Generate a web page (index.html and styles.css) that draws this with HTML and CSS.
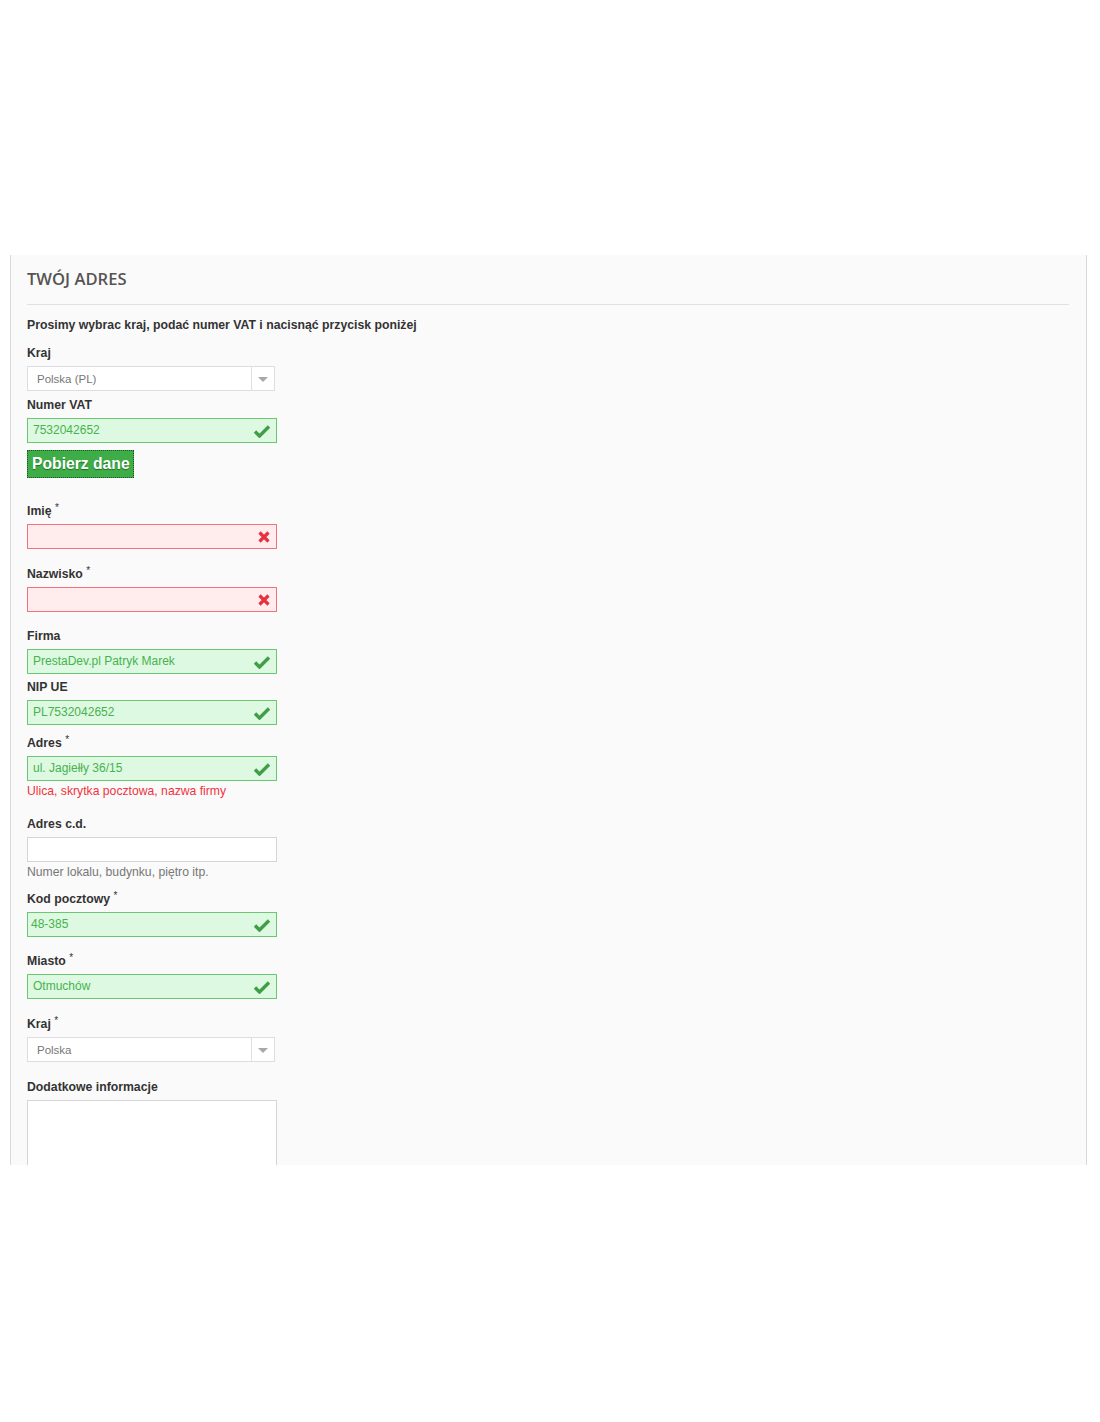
FILE: index.html
```html
<!DOCTYPE html>
<html lang="pl">
<head>
    <meta charset="UTF-8">
    <title>Twój adres</title>
    <link rel="stylesheet" href="styles.css">
</head>
<body>
    <div class="box">
        <h3 class="page-subheading">Twój adres</h3>
        <p class="intro">Prosimy wybrac kraj, podać numer VAT i nacisnąć przycisk poniżej</p>

        <div class="field gap-4">
            <label>Kraj</label>
            <div class="select"><span>Polska (PL)</span><i class="arrow"></i></div>
        </div>
        <div class="field gap-7">
            <label>Numer VAT</label>
            <div class="input ok">7532042652<svg class="icon" viewBox="0 0 18 14"><path d="M2 7.5l4.5 4.5L16 2.5" fill="none" stroke="currentColor" stroke-width="3.4"/></svg></div>
        </div>
        <button class="btn-fetch">Pobierz dane</button>

        <div class="field gap-15 first">
            <label>Imię <sup>*</sup></label>
            <div class="input error"><svg class="icon x" viewBox="0 0 12 12"><path d="M1.5 1.5l9 9M10.5 1.5l-9 9" fill="none" stroke="currentColor" stroke-width="3.2"/></svg></div>
        </div>
        <div class="field gap-14">
            <label>Nazwisko <sup>*</sup></label>
            <div class="input error"><svg class="icon x" viewBox="0 0 12 12"><path d="M1.5 1.5l9 9M10.5 1.5l-9 9" fill="none" stroke="currentColor" stroke-width="3.2"/></svg></div>
        </div>
        <div class="field gap-3">
            <label>Firma</label>
            <div class="input ok">PrestaDev.pl Patryk Marek<svg class="icon" viewBox="0 0 18 14"><path d="M2 7.5l4.5 4.5L16 2.5" fill="none" stroke="currentColor" stroke-width="3.4"/></svg></div>
        </div>
        <div class="field gap-8">
            <label>NIP UE</label>
            <div class="input ok">PL7532042652<svg class="icon" viewBox="0 0 18 14"><path d="M2 7.5l4.5 4.5L16 2.5" fill="none" stroke="currentColor" stroke-width="3.4"/></svg></div>
        </div>
        <div class="field gap-15">
            <label>Adres <sup>*</sup></label>
            <div class="input ok">ul. Jagiełły 36/15<svg class="icon" viewBox="0 0 18 14"><path d="M2 7.5l4.5 4.5L16 2.5" fill="none" stroke="currentColor" stroke-width="3.4"/></svg></div>
            <span class="hint red">Ulica, skrytka pocztowa, nazwa firmy</span>
        </div>
        <div class="field gap-9">
            <label>Adres c.d.</label>
            <div class="input"></div>
            <span class="hint">Numer lokalu, budynku, piętro itp.</span>
        </div>
        <div class="field gap-14">
            <label>Kod pocztowy <sup>*</sup></label>
            <div class="input ok narrow">48-385<svg class="icon" viewBox="0 0 18 14"><path d="M2 7.5l4.5 4.5L16 2.5" fill="none" stroke="currentColor" stroke-width="3.4"/></svg></div>
        </div>
        <div class="field gap-15">
            <label>Miasto <sup>*</sup></label>
            <div class="input ok">Otmuchów<svg class="icon" viewBox="0 0 18 14"><path d="M2 7.5l4.5 4.5L16 2.5" fill="none" stroke="currentColor" stroke-width="3.4"/></svg></div>
        </div>
        <div class="field gap-15">
            <label>Kraj <sup>*</sup></label>
            <div class="select"><span>Polska</span><i class="arrow"></i></div>
        </div>
        <div class="field">
            <label>Dodatkowe informacje</label>
            <div class="textarea"></div>
        </div>
    </div>
</body>
</html>
```

FILE: styles.css
```css
body { margin: 0; background: #fff; font-family: 'Liberation Sans', Arial, sans-serif; color: #333; }
.box { margin: 255px 0 0 10px; width: 1042px; height: 910px; overflow: hidden; padding: 0 17px 0 16px; background: #fafafa; border-left: 1px solid #d9d9d9; border-right: 1px solid #d9d9d9; }
.page-subheading { margin: 0; padding: 12px 0 14px; border-bottom: 1px solid #e1e1e1; font-family: 'Open Sans', sans-serif; font-weight: 600; font-size: 16.6px; line-height: 23px; color: #555454; text-transform: uppercase; }
.intro { margin: 11px 0 9px; font-size: 12.25px; font-weight: bold; line-height: 18px; }

.field label { display: block; font-size: 12.25px; font-weight: bold; line-height: 18px; padding-top: 1px; margin-bottom: 4px; }
.field sup { font-size: 10px; font-weight: normal; vertical-align: top; position: relative; top: -3px; }
.gap-3 { margin-bottom: 3px; }
.gap-4 { margin-bottom: 4px; }
.gap-7 { margin-bottom: 7px; }
.gap-8 { margin-bottom: 8px; }
.gap-9 { margin-bottom: 9px; }
.gap-14 { margin-bottom: 14px; }
.gap-15 { margin-bottom: 15px; }
.first { margin-top: 23px; }

.input { box-sizing: border-box; width: 250px; height: 25px; padding: 0 5px; border: 1px solid #d6d4d4; background: #fff; font-size: 12px; line-height: 23px; display: flex; align-items: center; justify-content: space-between; }
.input.ok { background: #ddf9e1; border-color: #6cc772; color: #48b24f; }
.input.ok .icon { color: #3f9e46; }
.input.error { background: #ffeded; border-color: #f5707c; justify-content: flex-end; }
.input.error .icon { color: #e8303f; }
.input.narrow { padding-left: 3px; }
.icon { width: 18px; height: 14px; margin-right: 0; }
.icon.x { width: 12px; height: 12px; margin-right: 1px; }

.select { box-sizing: border-box; width: 248px; height: 25px; border: 1px solid #dedede; background: #fff; display: flex; align-items: center; justify-content: space-between; font-size: 11.5px; color: #777; }
.select span { padding-left: 9px; }
.select .arrow { width: 22px; height: 23px; border-left: 1px solid #e0e0e0; position: relative; }
.select .arrow::after { content: ""; position: absolute; left: 6px; top: 10px; border-left: 5px solid transparent; border-right: 5px solid transparent; border-top: 5px solid #a8a8a8; }

.btn-fetch { display: block; margin: 0; height: 28px; padding: 0 3px 0 4px; border: 1px dotted #17551e; background: #3ead48; color: #fff; font-family: 'Liberation Sans', Arial, sans-serif; font-size: 15.7px; font-weight: bold; text-shadow: 0 1px 1px #1f6a26; }

.hint { display: block; margin-top: 2px; font-size: 12.2px; line-height: 16px; color: #777; }
.hint.red { color: #f13340; }

.textarea { box-sizing: border-box; width: 250px; height: 90px; border: 1px solid #d6d4d4; background: #fff; }
```
